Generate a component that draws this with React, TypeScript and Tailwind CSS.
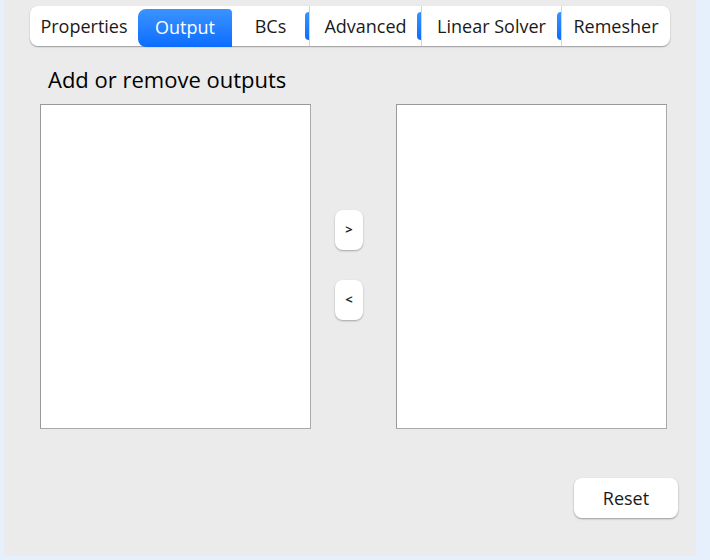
import React, { useState } from "react";

const tabs = [
  { label: "Properties", w: "w-[108px]" },
  { label: "Output", w: "w-[94px]" },
  { label: "BCs", w: "w-[77px]" },
  { label: "Advanced", w: "w-[111px]" },
  { label: "Linear Solver", w: "w-[139px]" },
  { label: "Remesher", w: "w-[108px]" },
];

const font = { fontFamily: '"Open Sans", "Noto Sans", sans-serif' };

const Separator = () => (
  <span aria-hidden className="relative w-px self-stretch bg-[#d4d4d4]">
    <span className="absolute top-[6px] right-px h-[28px] w-[4px] rounded-l-full bg-gradient-to-b from-[#3a93ff] to-[#0a6cff]" />
  </span>
);

const ListBox = () => (
  <div className="h-[325px] w-[271px] border border-[#a9a9a9] border-t-[#999] border-l-[#999] bg-white" />
);

const MoveButton = ({ children }: { children: React.ReactNode }) => (
  <button className="flex h-10 w-7 items-center justify-center rounded-lg bg-white text-[13px] font-bold text-[#222] shadow-[0_1px_2px_rgba(0,0,0,0.3)]">
    {children}
  </button>
);

export default function App() {
  const [active, setActive] = useState(1);

  return (
    <div className="h-[560px] w-[710px] bg-[#e6f0fc] pr-[14px] pb-1 pl-1" style={font}>
      <div className="flex h-full flex-col bg-[#ebebeb]">
        {/* tab bar */}
        <div className="mt-[6px] flex h-10 self-center rounded-lg bg-white shadow-[0_1px_1.5px_rgba(0,0,0,0.35)]">
          {tabs.map((t, i) => {
            const selected = i === active;
            const showSep = i > 0 && i !== active && i - 1 !== active;
            return (
              <React.Fragment key={t.label}>
                {showSep && <Separator />}
                <button
                  onClick={() => setActive(i)}
                  className={
                    selected
                      ? `${t.w} mt-[3px] -mb-px flex items-center justify-center rounded-l-lg rounded-tr-sm bg-gradient-to-b from-[#3a93ff] to-[#0a6cff] pb-[2px] text-[18px] text-white`
                      : `${t.w} flex items-center justify-center pt-px text-[18px] text-[#1a1a1a]`
                  }
                >
                  {t.label}
                </button>
              </React.Fragment>
            );
          })}
        </div>

        <h2 className="mt-[19px] pl-[44px] text-[22px] leading-[28px] text-black">
          Add or remove outputs
        </h2>

        <div className="mt-[11px] flex pl-[36px]">
          <ListBox />
          <div className="flex w-[85px] flex-col items-center justify-center gap-[30px] pr-[9px] pb-[3px]">
            <MoveButton>&gt;</MoveButton>
            <MoveButton>&lt;</MoveButton>
          </div>
          <ListBox />
        </div>

        <div className="mt-[49px] flex justify-end pr-[18px]">
          <button className="h-10 w-[104px] rounded-lg bg-white text-[18px] text-[#1a1a1a] shadow-[0_1px_2px_rgba(0,0,0,0.35)]">
            Reset
          </button>
        </div>
      </div>
    </div>
  );
}
